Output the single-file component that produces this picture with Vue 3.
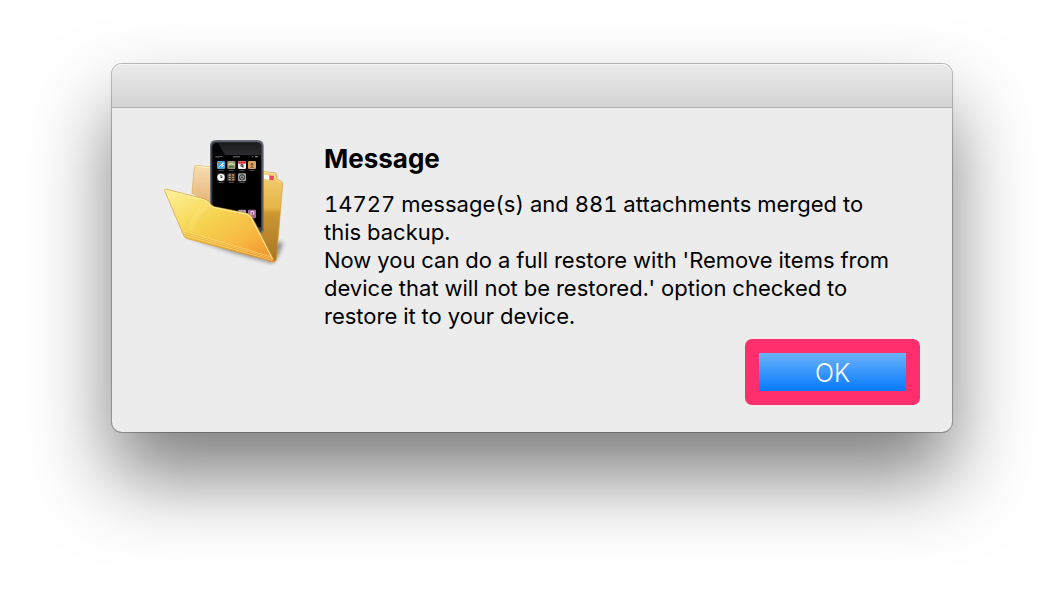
<template>
  <main class="desktop">
    <section v-if="open" class="dialog" role="alertdialog" aria-labelledby="dialog-title" aria-describedby="dialog-text">
      <header class="titlebar"></header>
      <div class="content">
        <svg class="app-icon" viewBox="30 24 384 384" aria-hidden="true">
          <defs>
            <linearGradient id="front" x1="0" y1="0" x2="1" y2="1">
              <stop offset="0" stop-color="#fff3a0" />
              <stop offset="0.4" stop-color="#f5d451" />
              <stop offset="0.7" stop-color="#f7b942" />
              <stop offset="1" stop-color="#f08b2c" />
            </linearGradient>
            <linearGradient id="back" x1="0" y1="0" x2="0" y2="1">
              <stop offset="0" stop-color="#f3cf75" />
              <stop offset="0.4" stop-color="#e5b647" />
              <stop offset="0.46" stop-color="#cc9731" />
              <stop offset="1" stop-color="#a87426" />
            </linearGradient>
            <linearGradient id="backLeft" x1="0" y1="0" x2="0" y2="1">
              <stop offset="0" stop-color="#f8dfb0" />
              <stop offset="1" stop-color="#e5b27a" />
            </linearGradient>
            <linearGradient id="glare" x1="0" y1="0" x2="0" y2="1">
              <stop offset="0" stop-color="#1b1b1f" />
              <stop offset="1" stop-color="#2c2c30" />
            </linearGradient>
            <filter id="soft" x="-20%" y="-50%" width="140%" height="200%">
              <feGaussianBlur stdDeviation="6" />
            </filter>
          </defs>
          <path d="M102 318 L250 368 L366 400 Q382 394 400 336 L376 338 L330 370 Z" fill="#000" opacity="0.4" filter="url(#soft)" />
          <path d="M126 190 L133 111 Q134 105 141 106 L190 112 L190 224 Z" fill="url(#backLeft)" stroke="#dfae4c" stroke-width="2" />
          <path d="M138 108 L188 114" stroke="#fff1c4" stroke-width="3" />
          <path d="M330 124 L374 128 Q380 129 380 136 L382 148 L394 154 Q399 157 398 164 L379 388 Q376 396 368 396 L320 300 Z" fill="url(#back)" stroke="#d39c37" stroke-width="2" />
          <path d="M342 128 L373 131 L377 149 L394 158" fill="none" stroke="#fbe39c" stroke-width="3" />
          <path d="M342 134 L373 138 L372 151 L342 147 Z" fill="#fff" />
          <path d="M358 136 L372 138 L371 151 L358 149 Z" fill="#f04458" />
          <path d="M180 226 V48 Q180 30 198 30 H322 Q341 30 341 49 V300 Q340 310 332 311 Z" fill="#686c77" />
          <path d="M183 226 V50 Q183 35 199 35 H320 Q337 35 337 50 V298 L331 306 Z" fill="#3a3d46" />
          <path d="M187 230 V52 Q187 38 202 38 H318 Q333 38 333 53 V292 L324 292 Z" fill="#050506" />
          <path d="M204 38 H318 Q333 38 333 53 V75 H225 Z" fill="url(#glare)" />
          <path d="M194 76 H326 V276 H310 L194 240 Z" fill="#000" />
          <g fill="#777">
            <rect x="196" y="79" width="13" height="3" />
            <rect x="211" y="78" width="6" height="3" />
            <rect x="249" y="79" width="21" height="3" />
            <rect x="306" y="79" width="4" height="3" />
            <rect x="315" y="78" width="9" height="4" />
          </g>
          <g v-for="app in apps" :key="app.x + '-' + app.y">
            <rect :x="app.x" :y="app.y" width="24" height="24" rx="4" :fill="app.color" />
            <rect :x="app.x + 4" :y="app.y + 27" width="16" height="2" fill="#666669" />
          </g>
          <path d="M206 112 L220 98 L215 110 L222 106" stroke="#e8f6ff" stroke-width="3" fill="none" />
          <path d="M204 96 L212 104" stroke="#dc6b3c" stroke-width="3" />
          <path d="M234 105 Q244 97 255 106" stroke="#d8d4b0" stroke-width="4" fill="none" />
          <rect x="237" y="107" width="15" height="6" fill="#55784b" />
          <rect x="264" y="94" width="24" height="7" rx="3" fill="#d9343d" />
          <path d="M273 104 H279 V113 M273 104 V109 H279" fill="none" stroke="#343434" stroke-width="3" />
          <circle cx="306" cy="103" r="4" fill="#85562c" />
          <path d="M300 113 Q306 105 312 113 Z" fill="#85562c" />
          <circle cx="213" cy="142" r="11" fill="#fff" />
          <path d="M213 135 V143 L218 141" stroke="#333" stroke-width="3" fill="none" />
          <path d="M236 135 H242 M236 142 H242 M236 149 H242" stroke="#a2a2a2" stroke-width="4" />
          <path d="M246 135 H252 M246 142 H252 M246 149 H252" stroke="#d87f30" stroke-width="4" />
          <circle cx="276" cy="142" r="8" fill="none" stroke="#3d3d3d" stroke-width="3" />
          <path d="M276 142 V134 M276 142 L269 146 M276 142 L283 146" stroke="#3d3d3d" stroke-width="3" />
          <rect x="264" y="239" width="24" height="22" rx="4" fill="#a695b0" />
          <rect x="294" y="239" width="24" height="26" rx="4" fill="#a8689f" />
          <path d="M303 256 V245 L311 244 V254" stroke="#e6cfe3" stroke-width="3" fill="none" />
          <path d="M43 180 Q45 177 51 178 L164 207 Q173 210 178 218 Q184 227 193 230 L292 250 Q302 253 307 263 L374 395 Q362 397 350 390 L112 326 Q103 323 101 316 Z" fill="url(#front)" stroke="#d79a2e" stroke-width="2" />
          <path d="M46 181 L164 210 Q172 213 177 221 Q183 230 194 233 L291 253 Q300 256 304 264 L368 388" fill="none" stroke="#fff2a5" stroke-width="3" />
          <path d="M112 300 Q123 246 165 212 Q176 216 182 228 Q140 258 126 306 Z" fill="#ffed83" opacity="0.25" />
          <path d="M96 302 L362 380 M99 308 L364 385 M102 315 L366 391" stroke="#ffe07a" stroke-width="2" />
          <path d="M97 305 L363 383 M100 312 L365 388 M104 320 L366 394" stroke="#d48b27" stroke-width="1" />
        </svg>
        <div class="message">
          <h1 id="dialog-title">Message</h1>
          <div id="dialog-text">
            <p>14727 message(s) and 881 attachments merged to this&nbsp;backup.</p>
            <p>Now you can do a full restore with 'Remove items from device that will not be restored.' option checked to restore it to your device.</p>
          </div>
        </div>
      </div>
      <footer class="actions">
        <button type="button" class="btn-ok" @click="open = false">OK</button>
      </footer>
    </section>
  </main>
</template>

<script setup>
import { ref } from 'vue';

const open = ref(true);

// home screen icons on the little phone
const apps = [
  { x: 201, y: 93, color: '#42a9e5' },
  { x: 232, y: 93, color: '#9b9b72' },
  { x: 264, y: 93, color: '#f3f3f3' },
  { x: 294, y: 93, color: '#dda361' },
  { x: 201, y: 130, color: '#3b3b3b' },
  { x: 232, y: 130, color: '#4a403b' },
  { x: 264, y: 130, color: '#a3a3a3' },
];
</script>

<style>
body {
  margin: 0;
  background: #fff;
}
</style>

<style scoped>
.desktop {
  padding: 64px 112px 160px;
  font-family: Inter, 'Liberation Sans', sans-serif;
  color: #000;
}
.dialog {
  background: #ececec;
  border-radius: 10px;
  box-shadow: 0 0 0 1px rgba(0, 0, 0, 0.25), 0 44px 80px rgba(0, 0, 0, 0.51);
}
.titlebar {
  height: 43px;
  border-bottom: 1px solid #b1b1b1;
  border-radius: 10px 10px 0 0;
  background: linear-gradient(#ebebeb, #d3d3d3);
  box-shadow: inset 0 1px 0 #f6f6f6;
}
.content {
  display: flex;
  align-items: flex-start;
  gap: 36px;
  padding: 30px 48px 0;
}
.app-icon {
  flex: none;
  width: 128px;
  height: 128px;
}
.message {
  flex: 1;
  padding-top: 7px;
  font-size: 22px;
  line-height: 28px;
  font-variant-numeric: tabular-nums;
}
.message h1 {
  margin: 0 0 17px;
  font-size: 26px;
  line-height: 28px;
  font-weight: 700;
}
.message p {
  margin: 0;
}
.actions {
  display: flex;
  justify-content: flex-end;
  padding: 9px 32px 27px;
}
.btn-ok {
  min-width: 175px;
  height: 66px;
  padding: 2px 0 0;
  border: 14px solid #ff2f6d;
  border-radius: 7px;
  background: linear-gradient(#6cb3fa, #067aff) padding-box;
  color: #fff;
  font-family: inherit;
  font-size: 25px;
  font-weight: 300;
  line-height: 36px;
  cursor: pointer;
}
.btn-ok:active {
  background: linear-gradient(#4c98f0, #0564de) padding-box;
}
</style>
